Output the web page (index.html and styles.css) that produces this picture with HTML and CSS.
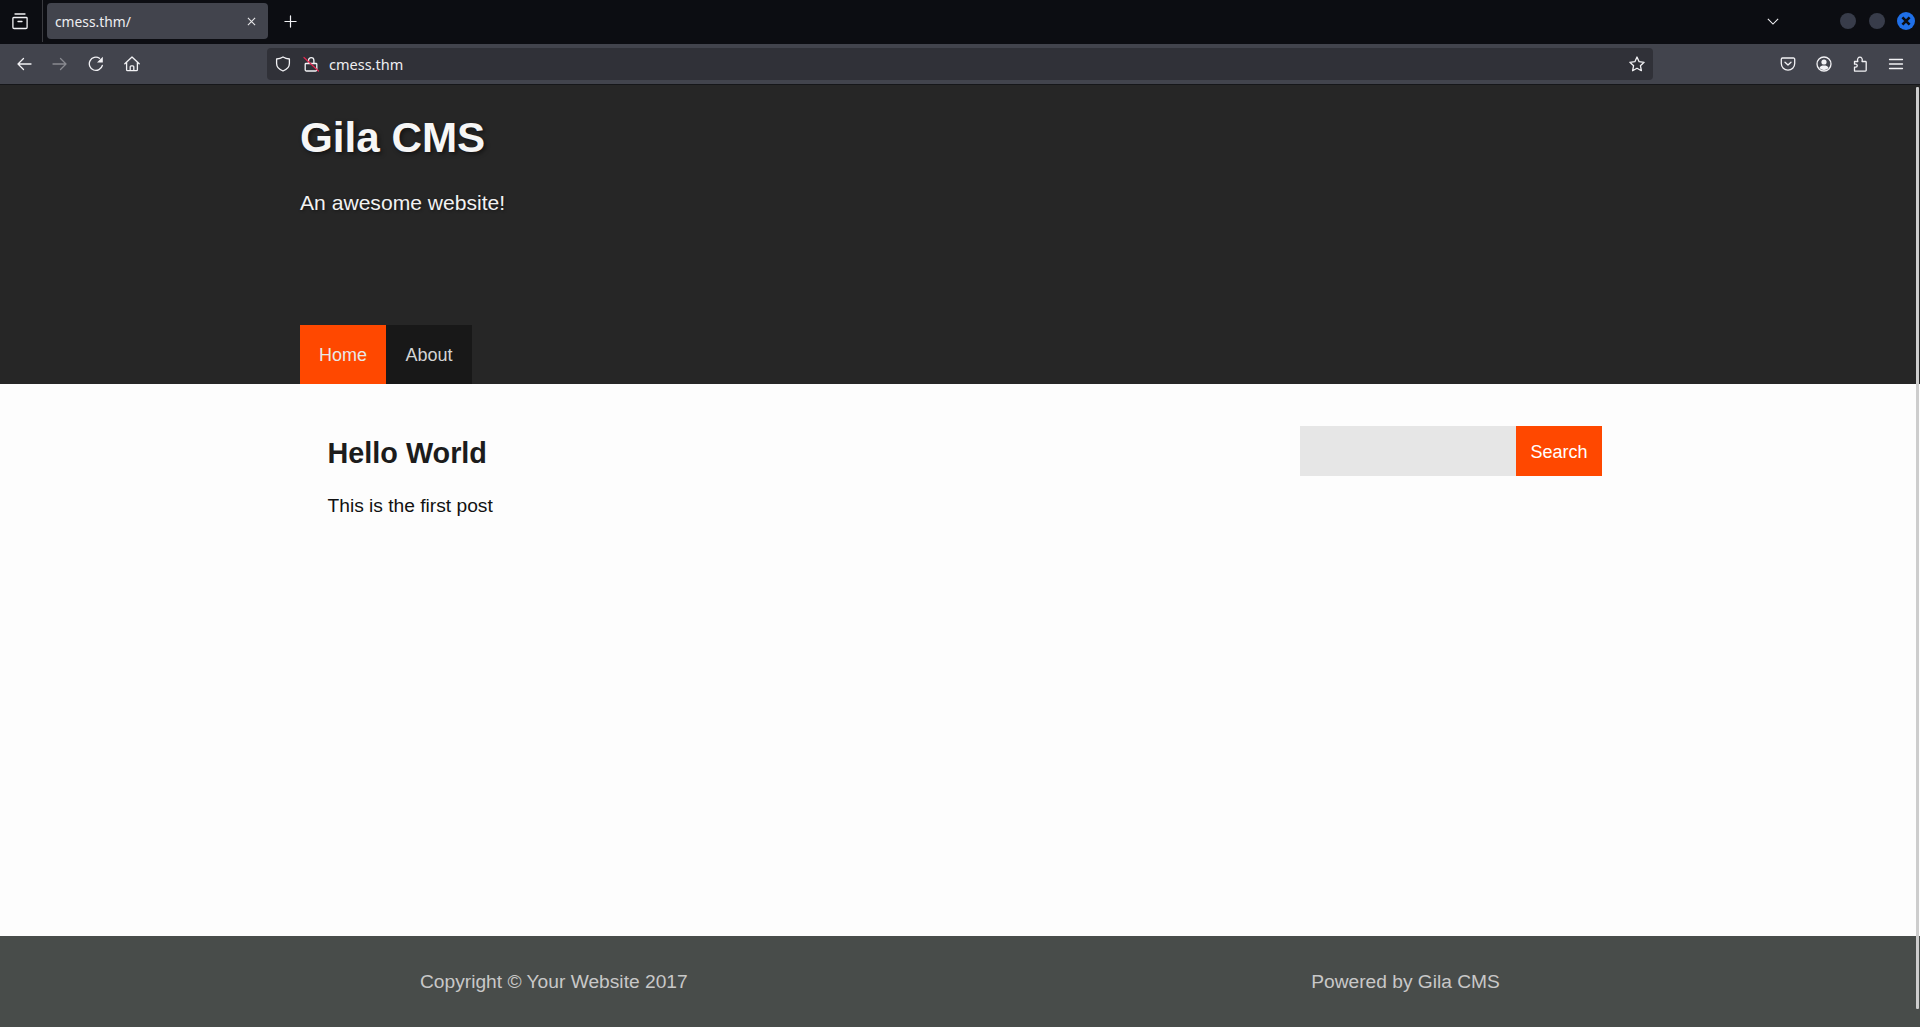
FILE: index.html
```html
<!DOCTYPE html>
<html lang="en">
<head>
<meta charset="utf-8">
<title>cmess.thm</title>
<link rel="stylesheet" href="styles.css">
</head>
<body>
<div class="browser">
  <div class="tabbar">
    <div class="tabs-view">
      <svg class="ico" viewBox="0 0 18 18"><path d="M4 2h10M2.700 5.500h12.600a.8.8 0 0 1 .8.8v9a1.200 1.200 0 0 1-1.200 1.200H3.100a1.200 1.200 0 0 1-1.200-1.200v-9a.8.8 0 0 1 .8-.8zM7 9.500h4"/></svg>
    </div>
    <div class="tab">
      <span class="tab-title">cmess.thm/</span>
      <svg class="ico-close" viewBox="0 0 10 10"><path d="M1 1l8 8M9 1l-8 8"/></svg>
    </div>
    <svg class="ico new-tab" viewBox="0 0 14 14"><path d="M7 1v12M1 7h12"/></svg>
    <div class="tabbar-right">
      <svg class="ico-chevron" viewBox="0 0 14 8"><path d="M1 1l6 6 6-6"/></svg>
      <div class="win-buttons">
        <span class="win-dot"></span>
        <span class="win-dot"></span>
        <span class="win-dot win-close"><svg viewBox="0 0 10 10"><path d="M2 2l6 6M8 2l-6 6"/></svg></span>
      </div>
    </div>
  </div>
  <div class="toolbar">
    <div class="nav-buttons">
      <svg class="ico" viewBox="0 0 16 16"><path d="M15 8H2M7.500 2.500L2 8l5.500 5.500"/></svg>
      <svg class="ico dim" viewBox="0 0 16 16"><path d="M1 8h13M8.500 2.500L14 8l-5.500 5.500"/></svg>
      <svg class="ico" viewBox="0 0 16 16"><path d="M14.300 9.500A6.600 6.600 0 1 1 11.500 2.300"/><path class="solid" d="M14.800 .8v5.800H9z"/></svg>
      <svg class="ico" viewBox="0 0 16 16"><path d="M.8 7.800L8 1l7.200 6.800M2.600 6.300v7.400a1 1 0 0 0 1 1h8.800a1 1 0 0 0 1-1V6.300M6.200 14.700v-3.900a1 1 0 0 1 1-1h1.600a1 1 0 0 1 1 1v3.900"/></svg>
    </div>
    <div class="urlbar">
      <svg class="ico shield" viewBox="0 0 16 16"><path d="M8 1c2 1.300 4.300 1.900 6.400 2v4.500c0 3.400-2.600 6-6.400 7.500-3.800-1.500-6.400-4.100-6.400-7.500V3c2.100-.1 4.400-.7 6.400-2z"/></svg>
      <svg class="ico lock" viewBox="0 0 16 16"><path d="M5.500 7.500V4.400a2.700 2.700 0 0 1 5.400 0v3.100M3.300 7.500h9.700a.8.8 0 0 1 .8.8v5.500a1.200 1.200 0 0 1-1.200 1.200H3.400a1.200 1.200 0 0 1-1.200-1.200V8.300a.8.8 0 0 1 .8-.8z"/><path class="strike" d="M1 1.500l14.500 13.500"/></svg>
      <span class="url">cmess.thm</span>
      <svg class="ico star" viewBox="0 0 16 16"><path d="M8 1l2.100 4.700 5 .6-3.700 3.400 1 5L8 12.200l-4.400 2.500 1-5L.9 6.300l5-.6z"/></svg>
    </div>
    <div class="tool-right">
      <svg class="ico" viewBox="0 0 16 16"><path d="M2.500 2h11A1.200 1.200 0 0 1 14.700 3.200V7.500a6.700 6.700 0 0 1-13.400 0V3.200A1.200 1.200 0 0 1 2.500 2zM5 6.300l3 2.800 3-2.800"/></svg>
      <svg class="ico" viewBox="0 0 16 16"><circle cx="8" cy="8" r="7"/><circle class="solid" cx="8" cy="6" r="2.600"/><path class="solid" d="M3.400 12c.8-1.800 2.500-2.400 4.600-2.400s3.800.6 4.600 2.400A6 6 0 0 1 8 14a6 6 0 0 1-4.600-2z"/></svg>
      <svg class="ico" viewBox="-1 0 16 16"><path d="M1.500 8.200V5.500h3.300c-1-2.900.7-4.300 2.100-4.300s3.100 1.400 2.100 4.300h3.400c.5 0 .8.300.8.800v8c0 .5-.3.800-.8.800H1.500v-4h1.300c1.900 0 1.900-2.900 0-2.900z"/></svg>
      <svg class="ico" viewBox="0 0 16 16"><path d="M1.500 3.500h13M1.500 8h13M1.500 12.500h13"/></svg>
    </div>
  </div>
</div>

<div class="page">
  <header class="site-header">
    <div class="wrap">
      <h1 class="site-title">Gila CMS</h1>
      <p class="site-tagline">An awesome website!</p>
      <nav class="site-nav">
        <a class="nav-item active" href="#">Home</a>
        <a class="nav-item" href="#">About</a>
      </nav>
    </div>
  </header>

  <main class="content">
    <article class="post">
      <h2 class="post-title">Hello World</h2>
      <p class="post-body">This is the first post</p>
    </article>
    <form class="search">
      <input class="search-input" type="text" aria-label="Search">
      <button class="search-button" type="button">Search</button>
    </form>
  </main>

  <footer class="site-footer">
    <span class="footer-left">Copyright © Your Website 2017</span>
    <span class="footer-right">Powered by Gila CMS</span>
  </footer>

  <div class="scrollbar"></div>
</div>
</body>
</html>
```
FILE: styles.css
```css
* { box-sizing: border-box; }
html, body { margin: 0; height: 100%; overflow: hidden; }
body {
  display: flex;
  flex-direction: column;
  font-family: "Liberation Sans", Arial, sans-serif;
  background: #fdfdfd;
}

/* Browser chrome */
.browser { flex: none; font-family: "Noto Sans", sans-serif; }
.ico {
  width: 16px;
  height: 16px;
  fill: none;
  stroke: #f2f2f5;
  stroke-width: 1.300;
  stroke-linecap: round;
  stroke-linejoin: round;
  flex: none;
}
.ico .solid { fill: #f2f2f5; stroke: none; }
.ico .strike { stroke: #e22850; stroke-width: 1.200; }
.ico.dim { opacity: .4; }

.tabbar {
  height: 44px;
  padding-bottom: 2px;
  background: #0c0d12;
  display: flex;
  align-items: center;
}
.tabs-view {
  width: 43px;
  height: 42px;
  padding-left: 11px;
  display: flex;
  align-items: center;
  border-right: 1px solid #3a3b40;
}
.tabs-view .ico { width: 18px; height: 18px; }
.tab {
  width: 221px;
  height: 36px;
  margin-left: 4px;
  padding: 0 12px 0 8px;
  background: #42444d;
  border-radius: 4px;
  display: flex;
  align-items: center;
  justify-content: space-between;
  color: #eeeef1;
  font-size: 13.800px;
}
.ico-close { width: 9px; height: 9px; fill: none; stroke: #e8e8ea; stroke-width: 1.200; }
.new-tab { width: 13px; height: 13px; margin-left: 16px; }
.tabbar-right {
  margin-left: auto;
  display: flex;
  align-items: center;
}
.ico-chevron { width: 12px; height: 7px; fill: none; stroke: #f2f2f5; stroke-width: 1.300; margin-right: 61px; }
.win-buttons { display: flex; gap: 13px; padding-right: 5px; align-items: center; }
.win-dot {
  width: 16px;
  height: 16px;
  border-radius: 50%;
  background: #383c4a;
  display: block;
}
.win-close {
  width: 18px;
  height: 18px;
  margin-left: -1px;
  background: #1f6fe8;
  padding: 3px;
}
.win-close svg { display: block; width: 12px; height: 12px; fill: none; stroke: #0c0d12; stroke-width: 2.200; }

.toolbar {
  height: 40px;
  background: #42444d;
  display: flex;
  align-items: center;
}
.nav-buttons {
  width: 267px;
  padding-left: 16px;
  display: flex;
  gap: 20px;
  align-items: center;
}
.urlbar {
  width: 1386px;
  height: 32px;
  background: #303138;
  border-radius: 4px;
  display: flex;
  align-items: center;
  padding: 0 8px 0 8px;
  color: #eeeef1;
  font-size: 14.500px;
}
.urlbar .lock { margin-left: 12px; }
.url { margin-left: 10px; }
.urlbar .star { margin-left: auto; }
.tool-right {
  display: flex;
  gap: 20px;
  align-items: center;
  margin-left: auto;
  padding-right: 16px;
}

/* Page */
.page {
  flex: 1;
  min-height: 0;
  display: flex;
  flex-direction: column;
  position: relative;
}
.scrollbar {
  position: absolute;
  right: 1px;
  top: 3px;
  width: 3px;
  height: 922px;
  background: #cdcdcd;
  border-radius: 1px;
}

.site-header {
  height: 300px;
  flex: none;
  background: #262626;
  border-top: 1px solid #16171a;
  color: #fff;
  padding-left: 300px;
}
.wrap { height: 100%; display: flex; flex-direction: column; align-items: flex-start; }
.site-title {
  margin: 29px 0 0;
  font-size: 42.200px;
  line-height: 48px;
  font-weight: 700;
  color: #f6f6f6;
  text-shadow: 2px 2px 4px rgba(0, 0, 0, .5);
}
.site-tagline {
  margin: 28px 0 0;
  font-size: 21.100px;
  line-height: 26px;
  color: #f2f2f2;
  text-shadow: 1px 1px 3px rgba(0, 0, 0, .4);
}
.site-nav { display: flex; margin-top: auto; }
.nav-item {
  width: 86px;
  height: 59px;
  padding-top: 2px;
  display: flex;
  align-items: center;
  justify-content: center;
  font-size: 18px;
  color: #d4d4d4;
  text-decoration: none;
  background: #181818;
}
.nav-item.active { background: #ff4800; color: #e8e8e8; }

.content {
  flex: 1;
  display: flex;
  justify-content: space-between;
  align-items: flex-start;
  padding: 42px 318px 0 327.500px;
}
.post-title {
  margin: 9px 0 0;
  font-size: 28.800px;
  line-height: 36px;
  font-weight: 700;
  color: #1c1c1c;
}
.post-body {
  margin: 22px 0 0;
  font-size: 19.200px;
  line-height: 26px;
  color: #111;
}
.search { display: flex; }
.search-input {
  width: 216px;
  height: 50px;
  border: 0;
  padding: 0;
  background: #e6e6e6;
}
.search-button {
  width: 86px;
  height: 50px;
  border: 0;
  padding: 2px 0 0;
  background: #ff4800;
  color: #fff;
  font-family: "Liberation Sans", Arial, sans-serif;
  font-size: 18px;
}

.site-footer {
  height: 91px;
  flex: none;
  background: #484c4a;
  color: #c8c8c8;
  font-size: 19.200px;
  display: flex;
  align-items: center;
  padding: 0 0 0 420px;
}
.footer-right { margin-left: 623.500px; }
```
